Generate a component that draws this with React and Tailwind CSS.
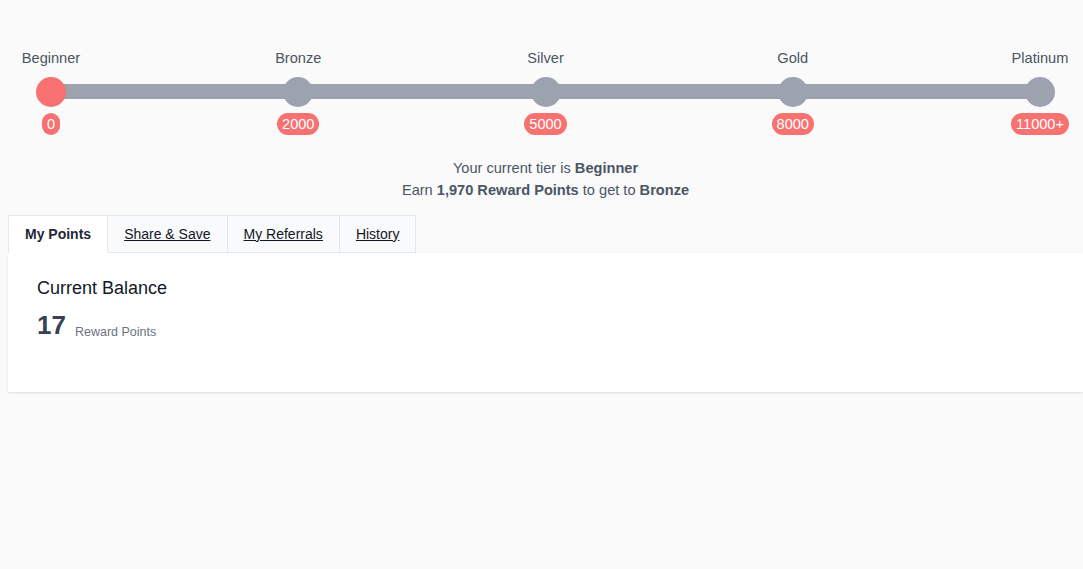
const tiers = [
  { name: 'Beginner', points: '0', active: true },
  { name: 'Bronze', points: '2000' },
  { name: 'Silver', points: '5000' },
  { name: 'Gold', points: '8000' },
  { name: 'Platinum', points: '11000+' },
];

const tabs = ['My Points', 'Share & Save', 'My Referrals', 'History'];

export default function App() {
  return (
    <div className="min-h-screen bg-[#fafafa] pl-2 font-['Liberation_Sans',Arial,sans-serif]">
      {/* Tier progress */}
      <div className="pt-[48px] px-[13px]">
        <div className="relative flex justify-between">
          <div className="absolute left-[30px] right-[30px] top-[36px] h-[15px] bg-[#9ca3af]" />
          {tiers.map(t => (
            <div key={t.name} className="relative w-[60px] flex flex-col items-center">
              <span className="text-[14.6px] leading-[20px] text-[#4b5563] whitespace-nowrap">{t.name}</span>
              <span className={`mt-[9px] w-[30px] h-[30px] rounded-full ${t.active ? 'bg-[#f87171]' : 'bg-[#9ca3af]'}`} />
              <span className="mt-[6px] h-[22px] px-[5px] rounded-full bg-[#f87171] text-white text-[14.6px] leading-[22px] whitespace-nowrap">{t.points}</span>
            </div>
          ))}
        </div>
      </div>

      {/* Tier summary */}
      <div className="mt-[22px] text-center text-[14.6px] leading-[22px] text-[#4b5563]">
        <p>Your current tier is <b>Beginner</b></p>
        <p>Earn <b>1,970 Reward Points</b> to get to <b>Bronze</b></p>
      </div>

      {/* Tabs */}
      <div className="mt-[14px] flex">
        {tabs.map((tab, i) => (
          <button
            key={tab}
            className={`h-[38px] px-[16px] text-[14px] border-t border-r border-[#e5e7eb] ${
              i === 0
                ? 'bg-white font-bold text-[#1f2937] border-l'
                : 'bg-[#f9fafb] text-[#111827] underline border-b'
            }`}
          >
            {tab}
          </button>
        ))}
      </div>

      {/* Balance card */}
      <div className="bg-white h-[139px] px-[29px] pt-[23px] shadow-[0_1px_2px_rgba(0,0,0,0.12)]">
        <h3 className="text-[18px] leading-[24px] text-[#111827]">Current Balance</h3>
        <div className="mt-[9px] flex items-baseline gap-[9px]">
          <span className="text-[26px] leading-[32px] font-bold text-[#374151]">17</span>
          <span className="relative top-[2px] text-[12.5px] text-[#6b7280]">Reward Points</span>
        </div>
      </div>
    </div>
  );
}
